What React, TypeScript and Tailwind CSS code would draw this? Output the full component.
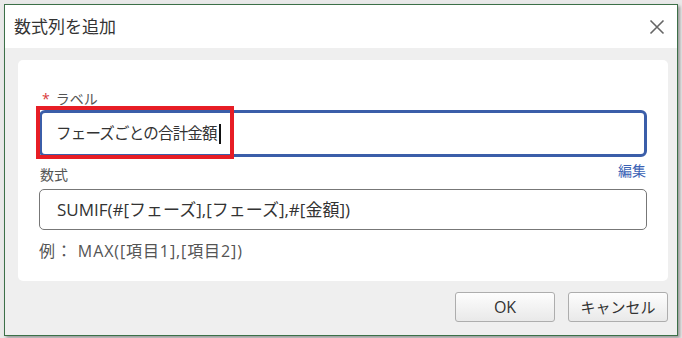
import React from "react";

export default function App() {
  const font = { fontFamily: '"Open Sans", "Noto Sans CJK JP", sans-serif' };
  return (
    <div className="w-[682px] h-[338px] bg-[#e9e9e9] pt-[4px] pl-[4px] pr-[4px] pb-[2px]" style={font}>
      <div className="w-full h-full border-[1.5px] border-[#3c7048] flex flex-col bg-[#efefef] shadow-[2px_2px_3px_rgba(0,0,0,0.35)]">
        <div className="h-[43px] bg-white flex items-center justify-between pl-[9px] pr-[12px] shrink-0">
          <span className="text-[17px] text-[#333] leading-none">数式列を追加</span>
          <svg width="16" height="16" viewBox="0 0 16 16" className="text-[#666]">
            <path d="M1.5 1.5 L14.5 14.5 M14.5 1.5 L1.5 14.5" stroke="currentColor" strokeWidth="1.6" fill="none" />
          </svg>
        </div>
        <div className="flex-1 flex flex-col">
          <div className="mt-[12px] ml-[13px] mr-[9px] h-[221px] bg-white rounded-[5px] px-[21px] pt-[29px]">
            <div className="flex items-center h-[20px] text-[14px] text-[#555] leading-none">
              <span className="text-[#d93b3b] mr-[6px] ml-[3px]">*</span>
              <span>ラベル</span>
            </div>
            <div className="relative mt-[1px]">
              <div className="h-[47px] border-[3px] border-[#3b5ea9] rounded-[6px] flex items-center pl-[14px]">
                <span className="text-[15.5px] tracking-[-0.8px] text-[#333] leading-none">フェーズごとの合計金額</span>
                <span className="w-[2px] h-[20px] bg-[#111] ml-[2px]" />
              </div>
              <div className="absolute left-[-3px] top-[-4px] w-[198px] h-[53px] border-[4px] border-[#e71d25]" />
            </div>
            <div className="flex items-end justify-between h-[24px] mt-[4px] text-[14px] leading-none">
              <span className="text-[#555] pl-[1px] pb-[3px]">数式</span>
              <span className="text-[#3a62b5] pr-[1px] pb-[7px]">編集</span>
            </div>
            <div className="h-[41px] mt-[4px] border border-[#777] rounded-[5px] flex items-center pl-[17px]">
              <span className="text-[17px] text-[#333] leading-none">SUMIF(#[フェーズ],[フェーズ],#[金額])</span>
            </div>
            <div className="mt-[13px] text-[16px] tracking-[0.9px] text-[#555] leading-none">例： MAX([項目1],[項目2])</div>
          </div>
          <div className="flex justify-end gap-[13px] mt-[11px] mr-[9px]">
            <button className="w-[100px] h-[30px] rounded-[3px] border border-[#adadad] bg-gradient-to-b from-[#fdfdfd] to-[#e9e9e9] text-[16px] text-[#333] leading-none">OK</button>
            <button className="w-[100px] h-[30px] rounded-[3px] border border-[#adadad] bg-gradient-to-b from-[#fdfdfd] to-[#e9e9e9] text-[15px] text-[#333] leading-none">キャンセル</button>
          </div>
        </div>
      </div>
    </div>
  );
}
